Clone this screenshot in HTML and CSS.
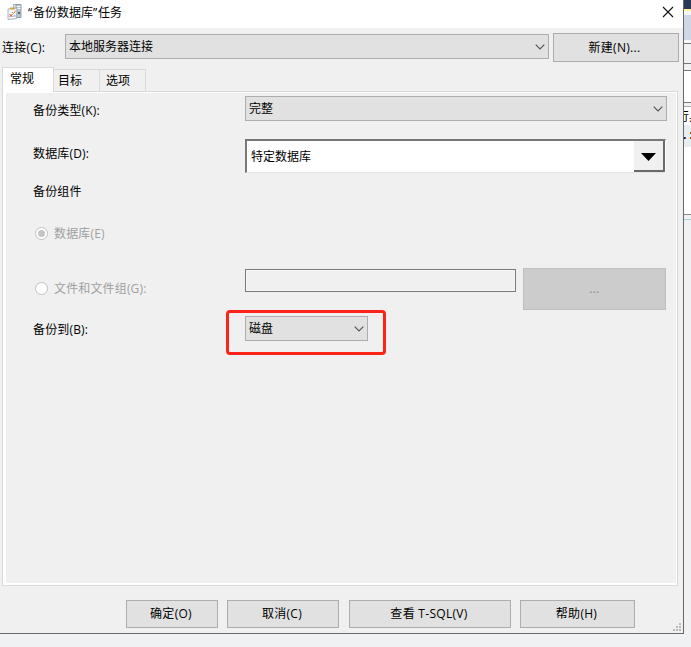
FILE: index.html
```html
<!DOCTYPE html>
<html lang="zh-CN">
<head>
<meta charset="utf-8">
<title>“备份数据库”任务</title>
<link rel="stylesheet" href="styles.css">
</head>
<body>
<div class="desktop">
  <main class="dialog">
    <header class="titlebar">
      <svg class="app-icon" width="16" height="18" viewBox="0 0 16 18">
        <path d="M6.500 1.500h3v12h-3z" fill="#e6edf2" stroke="#93a2ae" stroke-width=".8"/>
        <path d="M9 1.500h5v13H9z" fill="#b7c6d0" stroke="#7d8e9b" stroke-width=".8"/>
        <path d="M9.500 3.500h4M9.500 5.500h4" stroke="#f4f8fa"/>
        <path d="M11 9h2v2h-2z" fill="#4f6674"/>
        <path d="M1 6l9-1-.5 10.500L1 16.500z" fill="#f6f7fb" stroke="#98a1ad" stroke-width=".8"/>
        <path d="M3 4.500h5v2H3z" fill="#d1a34b"/>
        <path d="M5 9l1.500 1.500L9 7.500" fill="none" stroke="#c58a35"/>
        <path d="M2.500 11l3 3M5.500 11l-3 3" stroke="#c9473c"/>
        <path d="M6.500 13h2" stroke="#6888c9"/>
      </svg>
      <h1 class="title"><span class="quote">“</span>备份数据库<span class="quote">”</span>任务</h1>
      <svg class="close" width="12" height="12" viewBox="0 0 12 12"><path d="M1 1l10 10M11 1L1 11" stroke="#111" stroke-width="1.100"/></svg>
    </header>

    <div class="connection">
      <span class="connection-label">连接(C):</span>
      <div class="combo combo-connection"><span>本地服务器连接</span><svg class="chevron" width="10" height="6" viewBox="0 0 10 6"><path d="M.7.700L5 5 9.300.700"/></svg></div>
      <button class="button button-new">新建(N)...</button>
    </div>

    <nav class="tabs">
      <span class="tab tab-active">常规</span>
      <span class="tab tab-target">目标</span>
      <span class="tab tab-options">选项</span>
    </nav>

    <section class="panel">
      <div class="page">
        <div class="row row-type">
          <span class="label">备份类型(K):</span>
          <div class="combo combo-type"><span>完整</span><svg class="chevron" width="10" height="6" viewBox="0 0 10 6"><path d="M.7.700L5 5 9.300.700"/></svg></div>
        </div>
        <div class="row row-database">
          <span class="label">数据库(D):</span>
          <div class="dropdown"><span class="dropdown-text">特定数据库</span><span class="dropdown-button"><svg width="15" height="8" viewBox="0 0 15 8"><path d="M0 0h15L7.500 8z"/></svg></span></div>
        </div>
        <div class="row row-component"><span class="label">备份组件</span></div>
        <div class="row row-radio"><span class="label disabled"><i class="radio radio-on"></i>数据库(E)</span></div>
        <div class="row row-files">
          <span class="label disabled"><i class="radio"></i>文件和文件组(G):</span>
          <div class="file-input"></div>
          <button class="button browse">...</button>
        </div>
        <div class="row row-destination">
          <span class="label">备份到(B):</span>
          <div class="highlight">
            <div class="combo combo-disk"><span>磁盘</span><svg class="chevron" width="10" height="6" viewBox="0 0 10 6"><path d="M.7.700L5 5 9.300.700"/></svg></div>
          </div>
        </div>
      </div>
    </section>

    <footer class="actions">
      <button class="button ok">确定(O)</button>
      <button class="button cancel">取消(C)</button>
      <button class="button view">查看 T-SQL(V)</button>
      <button class="button help">帮助(H)</button>
    </footer>
    <svg class="grip" width="8" height="8" viewBox="0 0 8 8"><path d="M6 0h2v2H6zM3 3h2v2H3zM6 3h2v2H6zM0 6h2v2H0zM3 6h2v2H3zM6 6h2v2H6z" fill="#b9b9b9"/></svg>
  </main>

  <aside class="backdrop">
    <div class="strip navy"></div>
    <div class="strip menu"></div>
    <div class="strip toolbar"></div>
    <div class="strip gap"></div>
    <div class="strip sheet"></div>
    <div class="strip divider"></div>
    <div class="strip peek"><span class="peek-text">行具</span></div>
    <div class="strip peek-row"><span class="peek-colon">.&nbsp;:</span></div>
    <div class="strip blank"></div>
    <div class="strip edge"></div>
  </aside>
</div>
</body>
</html>
```

FILE: styles.css
```css
* { box-sizing: border-box; }

body {
  margin: 0;
  overflow: hidden;
  background: #f0f1f3;
  color: #000;
  font: 12px/18px "Open Sans", "Noto Sans CJK SC", sans-serif;
}

.desktop {
  display: grid;
  grid-template-columns: 684px 7px;
  width: 691px;
  height: 647px;
}

.dialog {
  position: relative;
  display: flex;
  flex-direction: column;
  height: 634px;
  background: #f0f0f0;
  border-right: 1px solid #66696c;
  border-bottom: 1px solid #66696c;
  white-space: nowrap;
}

.titlebar {
  display: flex;
  height: 28px;
  padding: 3px 9px 0 7px;
  background: #fff;
}

.title {
  flex: 1;
  margin: 1px 0 0 5px;
  font-size: 12px;
  font-weight: 400;
}

.quote { letter-spacing: .8px; }

.close { margin-top: 3px; }

.connection {
  display: flex;
  height: 39px;
  padding: 5px 0 0 2px;
}

.connection-label {
  width: 63px;
  padding-top: 6px;
  letter-spacing: .2px;
}

.combo {
  display: flex;
  align-items: center;
  justify-content: space-between;
  height: 25px;
  padding: 1px 3px 0;
  background: #e1e1e1;
  border: 1px solid #adadad;
}

.combo-connection {
  width: 484px;
  margin-top: 1px;
}

.chevron {
  margin-bottom: 1px;
  fill: none;
  stroke: #555;
  stroke-width: 1.200;
}

.button {
  padding: 0;
  background: #e1e1e1;
  border: 1px solid #adadad;
  border-radius: 0;
  color: #000;
  font: inherit;
  letter-spacing: .3px;
}

.button-new {
  width: 126px;
  height: 29px;
  margin-left: 4px;
  padding-right: 3px;
}

.tabs {
  display: flex;
  align-items: flex-end;
  height: 24px;
  padding-left: 2px;
}

.tab {
  height: 22px;
  padding: 2px 0 0 4px;
  border: 1px solid #d9d9d9;
  border-width: 1px 1px 0 0;
}

.tab-active {
  z-index: 1;
  width: 52px;
  height: 25px;
  margin-bottom: -1px;
  padding: 2px 0 0 7px;
  background: #fff;
  border-left-width: 1px;
}

.tab-target { width: 46px; }

.tab-options {
  width: 46px;
  padding-left: 6px;
}

.panel {
  width: 676px;
  height: 495px;
  margin-left: 2px;
  border: 1px solid #d9d9d9;
}

.page {
  height: 100%;
  border: solid #fff;
  border-width: 1px 1px 2px 3px;
}

.row {
  display: flex;
  align-items: flex-start;
  padding-left: 27px;
}

.label {
  flex: 0 0 212px;
  height: 18px;
  letter-spacing: .15px;
}

.row-type {
  height: 46px;
  padding-top: 3px;
}

.row-type .label { margin-top: 6px; }
.combo-type { width: 422px; }
.row-database { height: 44px; }
.row-database .label { margin-top: 6px; }

.dropdown {
  display: flex;
  width: 421px;
  height: 34px;
  background: #fff;
  border: 2px solid;
  border-color: #777 #fff #e3e3e3 #777;
  border-width: 2px 1px 1px 2px;
}

.dropdown-text {
  flex: 1;
  padding: 7px 0 0 4px;
}

.dropdown-button {
  display: flex;
  align-items: center;
  justify-content: center;
  width: 31px;
  padding-top: 2px;
  background: #f0f0f0;
  border: solid #696969;
  border-width: 0 2px 2px 0;
}

.row-component { height: 42px; }

.row-radio { height: 43px; }

.disabled {
  display: flex;
  align-items: center;
  color: #a0a0a0;
}

.radio {
  display: flex;
  align-items: center;
  justify-content: center;
  width: 13px;
  height: 13px;
  margin: 0 6px 2px 2px;
  background: #fff;
  border: 1px solid #bfbfbf;
  border-radius: 50%;
}

.radio-on::before {
  width: 7px;
  height: 7px;
  content: "";
  background: #c3c3c3;
  border-radius: 50%;
}

.row-files { height: 42px; }
.row-files .label { margin-top: 12px; }

.file-input {
  width: 271px;
  height: 23px;
  margin-top: 1px;
  border: 1px solid #7a7a7a;
  box-shadow: inset 0 0 0 1px #f7f7f7;
}

.browse {
  width: 143px;
  height: 42px;
  margin-left: 7px;
  background: #ccc;
  border-color: #bfbfbf;
  color: #888;
}

.row-destination .label {
  flex-basis: 193px;
  margin-top: 11px;
}

.highlight {
  width: 160px;
  height: 45px;
  padding: 3px 0 0 16px;
  border: 3px solid #fb2419;
  border-radius: 4px;
}

.combo-disk { width: 123px; }

.actions {
  display: flex;
  gap: 9px;
  padding: 14px 0 0 126px;
}

.actions .button {
  height: 28px;
  padding-right: 2px;
}

.ok { width: 92px; }
.cancel { width: 112px; }

.view {
  width: 162px;
  margin-left: 1px;
}

.help { width: 115px; }

.grip {
  position: absolute;
  right: 2px;
  bottom: 2px;
}

.backdrop {
  overflow: hidden;
  background: #f0f1f3;
}

.strip { overflow: hidden; }

.navy {
  height: 11px;
  background: #293955;
  border-bottom: 2px solid #fff09c;
}

.menu {
  height: 32px;
  background: #cfd6e5;
  border: solid #f5f6f8;
  border-width: 4px 0 3px;
}

.toolbar {
  height: 21px;
  border: solid #777;
  border-width: 1px 0;
}

.gap { height: 6px; }

.sheet {
  height: 33px;
  background: #fff;
  border: solid #777;
  border-width: 1px 0;
}

.divider {
  height: 4px;
  border-bottom: 1px solid #aaa;
}

.peek {
  height: 18px;
  background: #fff;
}

.peek-text {
  display: block;
  width: 30px;
  margin: 1px 0 0 -7px;
}

.peek-row {
  height: 22px;
  background: #e9edf2;
}

.peek-colon {
  display: block;
  width: 12px;
  margin: 1px 0 0 -1px;
  font-weight: 700;
}

.blank {
  height: 68px;
  background: #fff;
  border-bottom: 1px solid #888;
}

.edge {
  height: 5px;
  border-bottom: 1px solid #a9cedb;
}
```
